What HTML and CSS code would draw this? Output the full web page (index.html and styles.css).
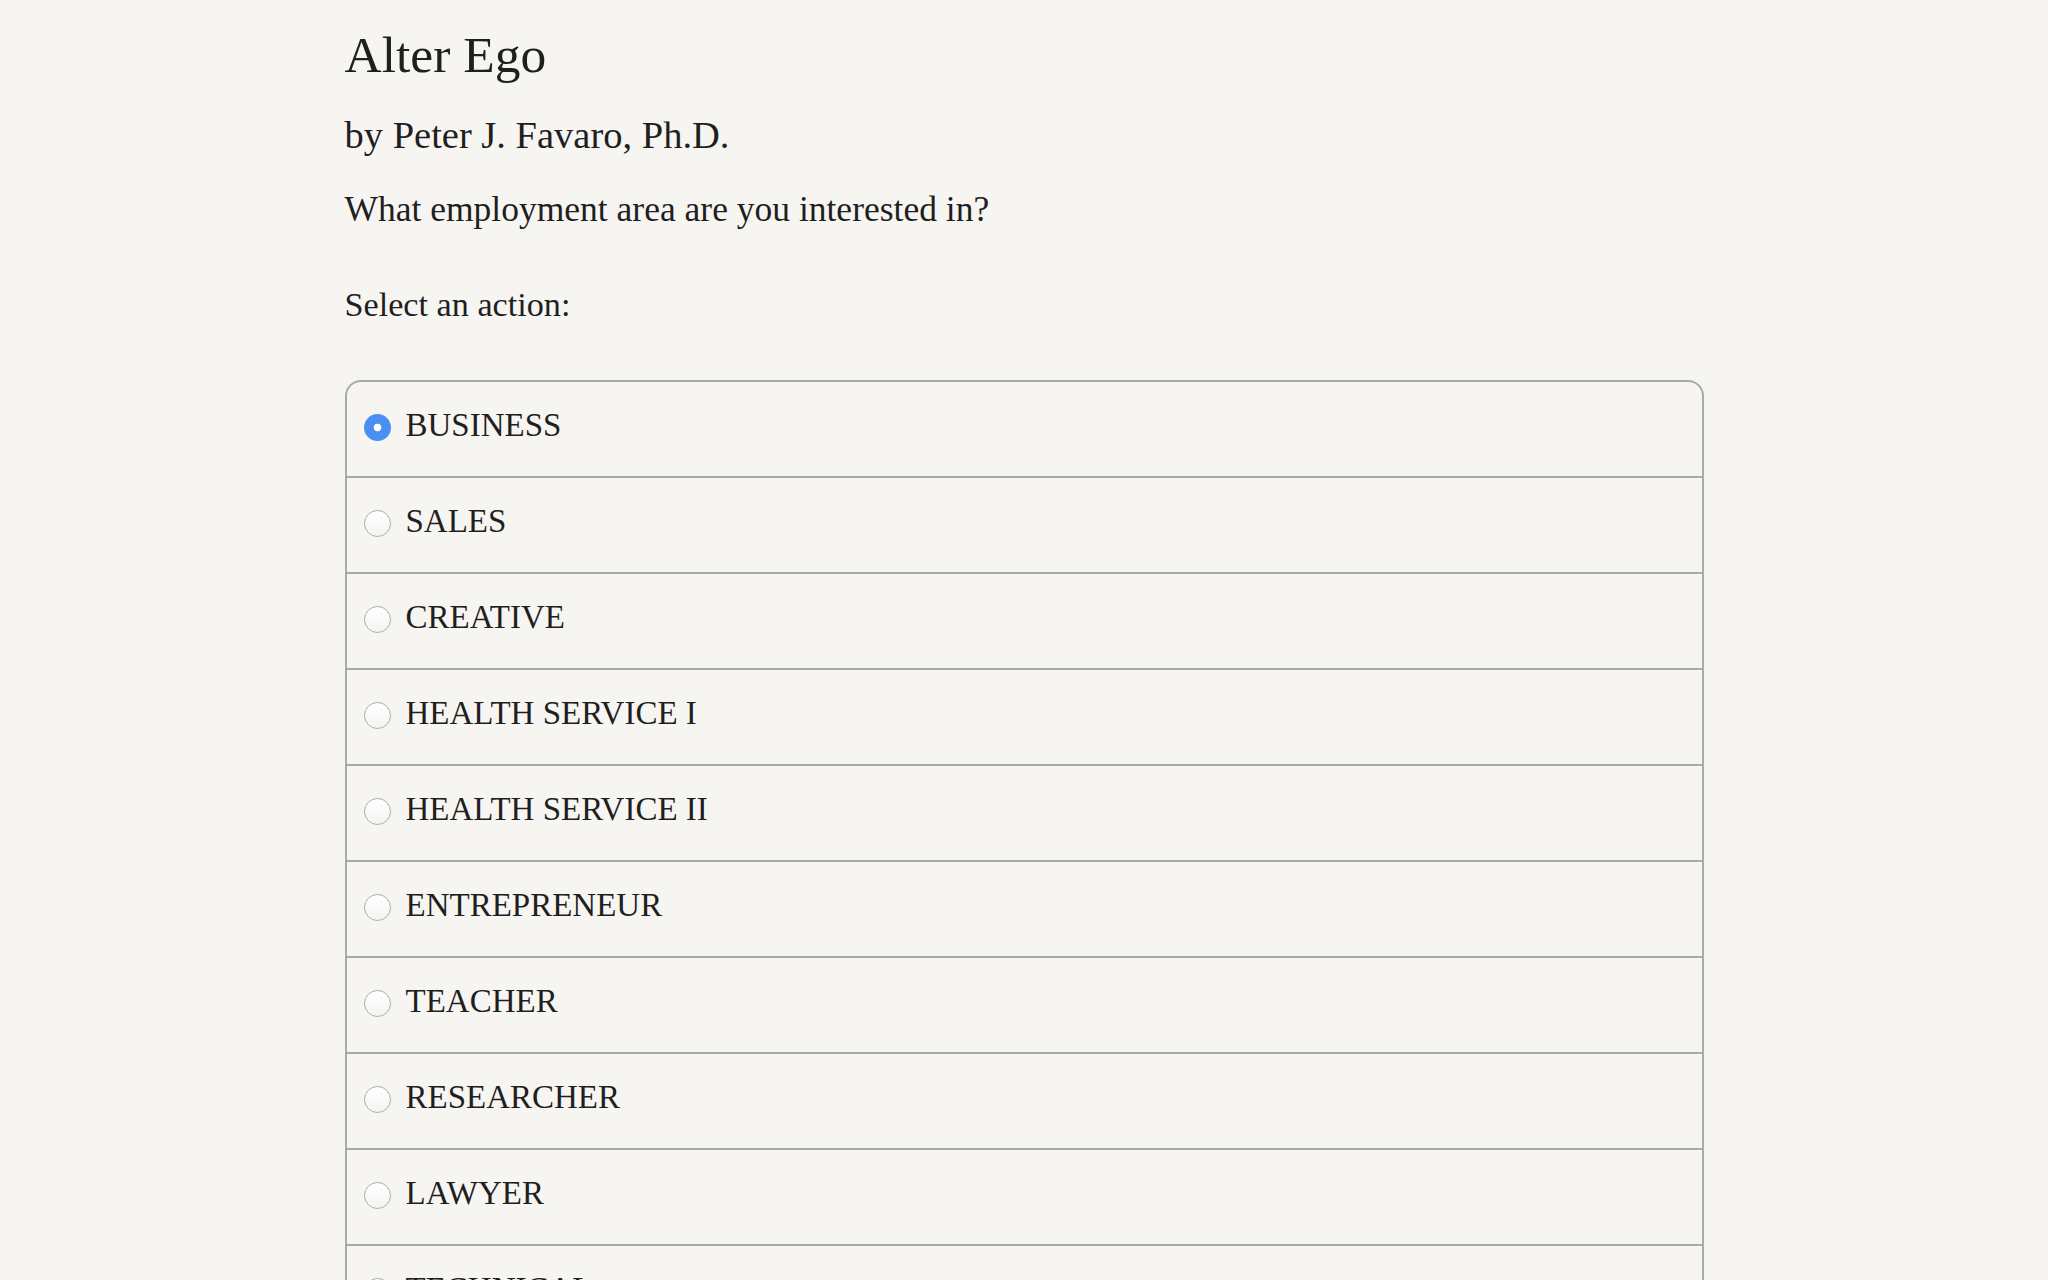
FILE: index.html
```html
<!DOCTYPE html>
<html lang="en">
<head>
<meta charset="utf-8">
<title>Alter Ego</title>
<link rel="stylesheet" href="styles.css">
</head>
<body>
<main class="page">
  <h1 class="title">Alter Ego</h1>
  <h2 class="byline">by Peter J. Favaro, Ph.D.</h2>
  <p class="question">What employment area are you interested in?</p>
  <p class="prompt">Select an action:</p>
  <form class="choices">
    <label class="choice"><input type="radio" name="area" checked><span class="choice-text">BUSINESS</span></label>
    <label class="choice"><input type="radio" name="area"><span class="choice-text">SALES</span></label>
    <label class="choice"><input type="radio" name="area"><span class="choice-text">CREATIVE</span></label>
    <label class="choice"><input type="radio" name="area"><span class="choice-text">HEALTH SERVICE I</span></label>
    <label class="choice"><input type="radio" name="area"><span class="choice-text">HEALTH SERVICE II</span></label>
    <label class="choice"><input type="radio" name="area"><span class="choice-text">ENTREPRENEUR</span></label>
    <label class="choice"><input type="radio" name="area"><span class="choice-text">TEACHER</span></label>
    <label class="choice"><input type="radio" name="area"><span class="choice-text">RESEARCHER</span></label>
    <label class="choice"><input type="radio" name="area"><span class="choice-text">LAWYER</span></label>
    <label class="choice"><input type="radio" name="area"><span class="choice-text">TECHNICAL</span></label>
  </form>
</main>
</body>
</html>
```

FILE: styles.css
```css
html, body {
  margin: 0;
  padding: 0;
  background: #f7f5f2;
}

body {
  font-family: "Liberation Serif", "Times New Roman", serif;
  color: #1f1f1f;
}

.page {
  width: 1359px;
  margin: 0 auto;
  padding-top: 25px;
  display: flex;
  flex-direction: column;
}

.title {
  margin: 0;
  font-size: 51.5px;
  line-height: 60px;
  font-weight: normal;
}

.byline {
  margin: 27px 0 0;
  font-size: 38.5px;
  line-height: 46px;
  font-weight: normal;
}

.question {
  margin: 30px 0 0;
  font-size: 35.5px;
  line-height: 42px;
}

.prompt {
  margin: 54px 0 0;
  font-size: 34.2px;
  line-height: 42px;
}

.choices {
  margin: 54px 0 0;
  border: 2px solid #aaaaaa;
  border-radius: 16px;
  display: flex;
  flex-direction: column;
}

.choice {
  display: flex;
  align-items: flex-start;
  height: 96px;
  padding: 24px 17px 0;
  box-sizing: border-box;
  border-bottom: 2px solid #aaaaaa;
  gap: 15px;
}

.choice:last-child {
  border-bottom: none;
}

.choice input {
  appearance: none;
  -webkit-appearance: none;
  margin: 8px 0 0;
  width: 27px;
  height: 27px;
  flex: none;
  border-radius: 50%;
  border: 1.5px solid #acacac;
  box-sizing: border-box;
  background: linear-gradient(#ffffff, #f4f4f4);
}

.choice input:checked {
  border: none;
  background: radial-gradient(circle, #ffffff 0, #ffffff 3.5px, #4a8ff2 4.2px);
}

.choice-text {
  font-size: 33px;
  line-height: 38px;
}
```
